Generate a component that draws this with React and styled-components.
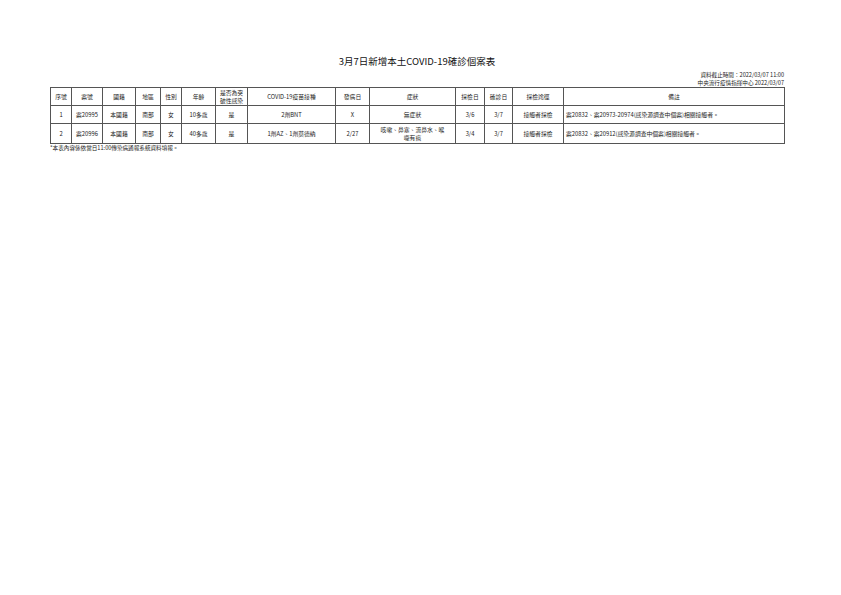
import React from 'react';
import styled, { createGlobalStyle } from 'styled-components';

const GlobalStyle = createGlobalStyle`
  html, body {
    margin: 0;
    padding: 0;
    background: #ffffff;
  }
  body {
    font-family: "Noto Sans CJK TC", "Noto Sans", sans-serif;
    color: #222;
  }
`;

const Page = styled.div`
  width: 841px;
  height: 595px;
  box-sizing: border-box;
  padding: 54px 57px 0 50px;
  background: #fff;
`;

const Title = styled.h1`
  margin: 0;
  font-size: 9.5px;
  font-weight: 400;
  line-height: 14px;
  text-align: center;
  color: #111;
`;

const Meta = styled.div`
  margin-top: 3px;
  text-align: right;
  font-size: 5.6px;
  line-height: 8px;
  color: #222;
`;

const Table = styled.table`
  width: 734px;
  table-layout: fixed;
  border-collapse: collapse;
  margin-top: 0;
`;

const HeadCell = styled.th`
  border: 1px solid #555;
  height: 17px;
  padding: 0 1px;
  font-size: 5.8px;
  font-weight: 400;
  line-height: 7.5px;
  text-align: center;
  vertical-align: middle;
  color: #222;
`;

const Cell = styled.td`
  border: 1px solid #555;
  height: ${p => (p.$tall ? 19 : 17)}px;
  padding: 0 ${p => (p.$left ? 2 : 1)}px;
  font-size: 5.8px;
  line-height: 7.5px;
  text-align: ${p => (p.$left ? 'left' : 'center')};
  vertical-align: middle;
  color: #222;
`;

const Note = styled.div`
  margin-top: 1px;
  font-size: 5.6px;
  line-height: 7px;
  color: #222;
`;

const columns = [
  { label: '序號', width: 21 },
  { label: '案號', width: 31 },
  { label: '國籍', width: 33 },
  { label: '地區', width: 25 },
  { label: '性別', width: 21 },
  { label: '年齡', width: 34 },
  { label: ['是否為突', '破性感染'], width: 32 },
  { label: 'COVID-19疫苗接種', width: 88 },
  { label: '發病日', width: 34 },
  { label: '症狀', width: 86 },
  { label: '採檢日', width: 29 },
  { label: '確診日', width: 28 },
  { label: '採檢途徑', width: 51 },
  { label: '備註', width: 221 },
];

const rows = [
  {
    cells: ['1', '案20995', '本國籍', '南部', '女', '10多歲', '是', '2劑BNT', 'X', '無症狀', '3/6', '3/7', '接觸者採檢'],
    note: '案20832、案20973-20974(感染源調查中個案)相關接觸者。',
  },
  {
    tall: true,
    cells: ['2', '案20996', '本國籍', '南部', '女', '40多歲', '是', '1劑AZ、1劑莫德納', '2/27', ['咳嗽、鼻塞、流鼻水、喉', '嚨有痰'], '3/4', '3/7', '接觸者採檢'],
    note: '案20832、案20912(感染源調查中個案)相關接觸者。',
  },
];

const renderLines = value =>
  Array.isArray(value)
    ? value.map((line, i) => (
        <React.Fragment key={i}>
          {i > 0 && <br />}
          {line}
        </React.Fragment>
      ))
    : value;

const App = () => (
  <Page>
    <GlobalStyle />
    <Title>3月7日新增本土COVID-19確診個案表</Title>
    <Meta>
      資料截止時間：2022/03/07 11:00
      <br />
      中央流行疫情指揮中心 2022/03/07
    </Meta>
    <Table>
      <colgroup>
        {columns.map((c, i) => (
          <col key={i} style={{ width: c.width }} />
        ))}
      </colgroup>
      <thead>
        <tr>
          {columns.map((c, i) => (
            <HeadCell key={i}>{renderLines(c.label)}</HeadCell>
          ))}
        </tr>
      </thead>
      <tbody>
        {rows.map((r, i) => (
          <tr key={i}>
            {r.cells.map((v, j) => (
              <Cell key={j} $tall={r.tall}>{renderLines(v)}</Cell>
            ))}
            <Cell $left $tall={r.tall}>{r.note}</Cell>
          </tr>
        ))}
      </tbody>
    </Table>
    <Note>*本表內容係依當日11:00傳染病通報系統資料填報。</Note>
  </Page>
);

export default App;
